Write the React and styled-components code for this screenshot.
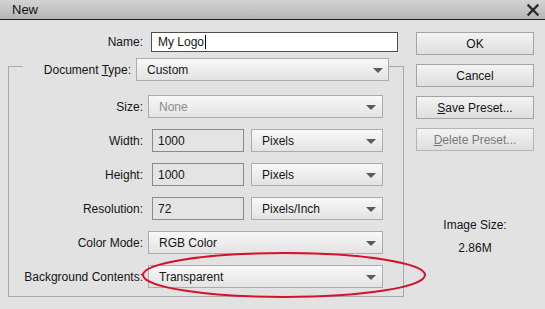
import React from 'react'
import styled, { createGlobalStyle } from 'styled-components'

const GlobalStyle = createGlobalStyle`
    body {
        margin: 0;
        background: #e2e2e2;
        font-family: "Liberation Sans", Arial, sans-serif;
        font-size: 12px;
        color: #141414;
    }
`

const Window = styled.div`
    position: relative;
    width: 545px;
    height: 309px;
    overflow: hidden;
    background: #e2e2e2;
`

const TitleBar = styled.div`
    height: 19px;
    border-bottom: 1px solid #1c1c1c;
    background: linear-gradient(#d3d3d3, #b6b6b6);
    display: flex;
    align-items: center;
    justify-content: space-between;
    padding: 0 5px 0 12px;
    font-size: 13px;
    color: #111;
`

const Body = styled.div`
    display: grid;
    grid-template-columns: 398px 118px;
    column-gap: 18px;
    padding-top: 12px;
`

const LeftCol = styled.div`
    display: flex;
    flex-direction: column;
`

const NameRow = styled.div`
    display: grid;
    grid-template-columns: 143px 247px;
    column-gap: 8px;
    align-items: center;
    height: 20px;
`

const Label = styled.span`
    justify-self: end;
    white-space: nowrap;
`

const TextBox = styled.div`
    box-sizing: border-box;
    border: 1px solid ${p => (p.$white ? '#4e4e4e' : '#8a8a8a')};
    background: ${p => (p.$white ? '#ffffff' : '#e4e4e4')};
    padding-left: ${p => (p.$white ? '6px' : '5px')};
    display: flex;
    align-items: center;
    width: ${p => p.$width || 'auto'};
    margin-left: ${p => p.$offset || '0'};
    height: ${p => p.$height || '20px'};
`

const Caret = styled.span`
    display: inline-block;
    width: 1px;
    height: 14px;
    background: #000;
    margin-left: 1px;
`

const Group = styled.fieldset`
    margin: 0 0 0 8px;
    width: 390px;
    box-sizing: border-box;
    border: 1px solid #a9a9a9;
    padding: 0 14px 8px 14px;
`

const Legend = styled.legend`
    padding: 6px 0 0 0;
    display: grid;
    grid-template-columns: 108px 253px;
    column-gap: 5px;
    align-items: center;
`

const Rows = styled.div`
    display: flex;
    flex-direction: column;
    gap: 11px;
    padding-top: 14px;
`

const Row = styled.div`
    display: grid;
    grid-template-columns: 120px 235px;
    column-gap: 5px;
    align-items: center;
    height: 23px;
`

const Controls = styled.div`
    display: flex;
    align-items: center;
    gap: 7px;
`

const Select = styled.div`
    position: relative;
    height: 23px;
    box-sizing: border-box;
    border: 1px solid #acacac;
    background: linear-gradient(#f8f8f8, #e3e3e3);
    display: flex;
    align-items: center;
    padding-left: 10px;
    flex: 1;
    color: ${p => (p.$disabled ? '#8a8a8a' : '#141414')};

    &::after {
        content: '';
        position: absolute;
        right: ${p => p.$arrowRight || '6px'};
        top: 9px;
        border-left: 5px solid transparent;
        border-right: 5px solid transparent;
        border-top: 5px solid #5a5a5a;
    }
`

const RightCol = styled.div`
    display: flex;
    flex-direction: column;
    gap: 9px;
`

const Button = styled.div`
    height: 23px;
    box-sizing: border-box;
    border: 1px solid ${p => (p.$disabled ? '#b4b4b4' : '#a4a4a4')};
    background: linear-gradient(#f3f3f3, #dedede);
    display: flex;
    align-items: center;
    justify-content: center;
    color: ${p => (p.$disabled ? '#7a7a7a' : '#141414')};
`

const Info = styled.div`
    margin-top: 58px;
    display: flex;
    flex-direction: column;
    align-items: center;
    gap: 9px;
    line-height: 14px;
`

const Ellipse = styled.svg`
    position: absolute;
    left: 0;
    top: 0;
    pointer-events: none;
`

const u = ch => <span style={{ textDecoration: 'underline' }}>{ch}</span>

const CloseIcon = () => (
    <svg width="14" height="14" viewBox="0 0 14 14">
        <path d="M2.5 2.5 L11.5 11.5 M11.5 2.5 L2.5 11.5" stroke="#2a2a2a" strokeWidth="2.4" strokeLinecap="square" />
    </svg>
)

const App = () => {
    return (
        <Window>
            <GlobalStyle />
            <TitleBar>
                <span>New</span>
                <CloseIcon />
            </TitleBar>
            <Body>
                <LeftCol>
                    <NameRow>
                        <Label>Name:</Label>
                        <TextBox $white>My Logo<Caret /></TextBox>
                    </NameRow>
                    <Group>
                        <Legend>
                            <Label>Document {u('T')}ype:</Label>
                            <Select $arrowRight="5px">Custom</Select>
                        </Legend>
                        <Rows>
                            <Row>
                                <Label>Size:</Label>
                                <Select $disabled>None</Select>
                            </Row>
                            <Row>
                                <Label>Width:</Label>
                                <Controls>
                                    <TextBox $width="92px" $offset="4px" $height="23px">1000</TextBox>
                                    <Select>Pixels</Select>
                                </Controls>
                            </Row>
                            <Row>
                                <Label>Height:</Label>
                                <Controls>
                                    <TextBox $width="92px" $offset="4px" $height="23px">1000</TextBox>
                                    <Select>Pixels</Select>
                                </Controls>
                            </Row>
                            <Row>
                                <Label>Resolution:</Label>
                                <Controls>
                                    <TextBox $width="92px" $offset="4px" $height="23px">72</TextBox>
                                    <Select>Pixels/Inch</Select>
                                </Controls>
                            </Row>
                            <Row>
                                <Label>Color Mode:</Label>
                                <Select>RGB Color</Select>
                            </Row>
                            <Row>
                                <Label>Background Contents:</Label>
                                <Select>Transparent</Select>
                            </Row>
                        </Rows>
                    </Group>
                </LeftCol>
                <RightCol>
                    <Button>OK</Button>
                    <Button>Cancel</Button>
                    <Button>{u('S')}ave Preset...</Button>
                    <Button $disabled>{u('D')}elete Preset...</Button>
                    <Info>
                        <span>Image Size:</span>
                        <span>2.86M</span>
                    </Info>
                </RightCol>
            </Body>
            <Ellipse width="545" height="309">
                <ellipse cx="284" cy="275" rx="141" ry="22" fill="none" stroke="#d4122c" strokeWidth="2" />
            </Ellipse>
        </Window>
    )
}

export default App
